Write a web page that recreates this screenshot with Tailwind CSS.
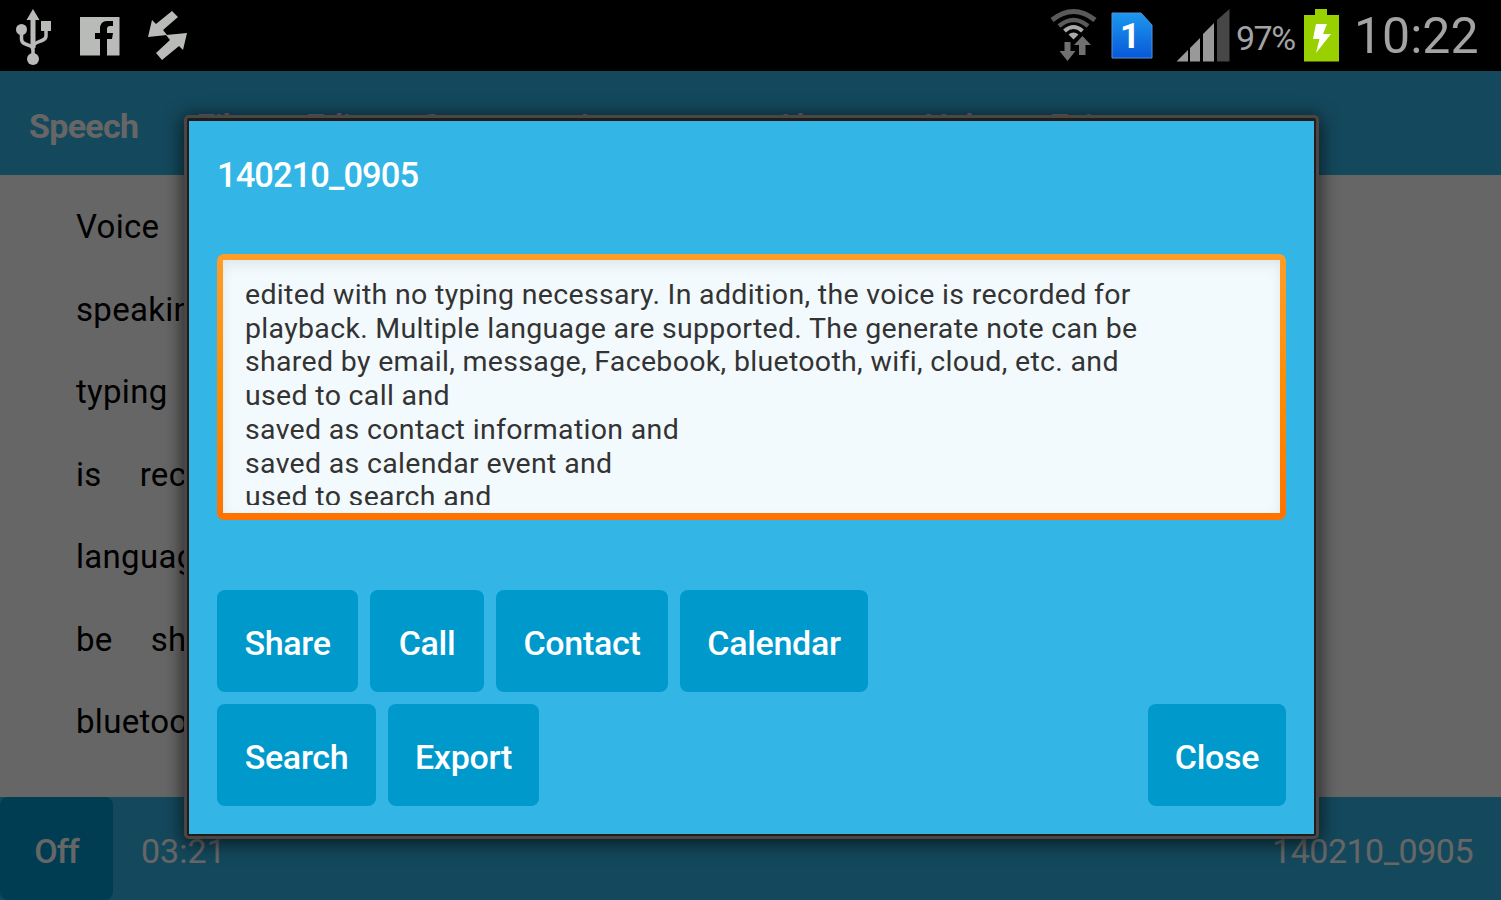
<!DOCTYPE html>
<html lang="en">
<head>
    <meta charset="UTF-8">
    <meta name="viewport" content="width=device-width, initial-scale=1.0">
    <title>Speech Notes</title>
    <script src="https://cdn.jsdelivr.net/npm/@tailwindcss/browser@4"></script>
</head>
<body class="h-[900px] w-[1501px] overflow-hidden bg-black font-['Roboto',sans-serif]">
    <div class="flex h-full flex-col">
        <!-- Status bar -->
        <header class="flex h-[71px] shrink-0 items-start justify-between bg-black text-[#a3a3a3]">
            <svg class="h-[71px] w-[200px]" viewBox="0 0 200 71" fill="#b9bbb9">
                <!-- USB -->
                <path d="M33 9l-6.500 11h4v28h5V20h4z"/>
                <circle cx="33" cy="59" r="6"/>
                <circle cx="21.500" cy="29.500" r="5.500"/>
                <path d="M41 21h10v10H41z"/>
                <path d="M33 57V45M21.500 30v9q0 4 4 5l4 1.500q3.500 1.500 3.500 5M46 30v6q0 3-4 4.500l-5 2q-4 1.500-4 5" fill="none" stroke="#b9bbb9" stroke-width="3.500"/>
                <!-- Facebook -->
                <path d="M80 17h39.500v38.500H107V39h5l1-6h-6v-4q0-3 3-3h3v-5h-6q-7 0-7 8v4h-5v6h5v16.500H80z"/>
                <!-- Sync arrows -->
                <path d="M172 11l6 6-15 13 4 5L148 37l4-17 4 4z"/>
                <path d="M187 33l-4 17-4-4-17 14-6-7 14-13-4-5z"/>
            </svg>
            <div class="flex h-[71px] items-start">
                <svg class="h-[71px] w-[186px]" viewBox="1050 0 186 71">
                    <!-- Wifi -->
                    <g fill="none">
                        <path d="M1052 20q21.500-17 43 0" stroke="#5a5a5a" stroke-width="5"/>
                        <path d="M1059 26q14.500-12 29 0" stroke="#5a5a5a" stroke-width="4.500"/>
                        <path d="M1064.500 31q9-8 18 0" stroke="#aaa" stroke-width="4"/>
                    </g>
                    <path d="M1068.500 34.500q5-4 10 0l-5 5z" fill="#aaa"/>
                    <path d="M1064.500 42h6v9h5l-8 10-8-10h5zM1079 55v-10h-5l8.500-9 8.500 9h-5.500v10z" fill="#707070"/>
                    <!-- SIM -->
                    <defs>
                        <linearGradient id="sim" x1="0" y1="0" x2="0" y2="1">
                            <stop offset="0" stop-color="#1c98ee"/>
                            <stop offset="1" stop-color="#0858d8"/>
                        </linearGradient>
                    </defs>
                    <path d="M1112 13h29l11 12v33h-40z" fill="url(#sim)" stroke="#5b8fd0" stroke-width="1"/>
                    <text x="1120" y="48" font-family="Roboto" font-size="35" font-weight="700" fill="#fff">1</text>
                    <!-- Signal -->
                    <path d="M1176.500 61.500L1188 50v11.500z" fill="#999"/>
                    <path d="M1190 48l10-10v23.500h-10zM1203 34l11-11v38.500h-11z" fill="#999"/>
                    <path d="M1217 20l12.500-11v52.500H1217z" fill="#474747"/>
                </svg>
                <span class="mt-[17px] w-[67px] text-[34px] leading-[42px] tracking-[-1.5px]">97%</span>
                <svg class="h-[71px] w-[38px]" viewBox="1303 0 38 71">
                    <path d="M1304 15h11V9h12v6h12v46.500h-35z" fill="#98d000"/>
                    <path d="M1316 24h11l-4 10h8l-15 19 3.500-14H1313z" fill="#fff"/>
                </svg>
                <span class="ml-[13px] w-[147px] text-[50px] leading-[72px]">10:22</span>
            </div>
        </header>

        <!-- App window behind the dialog -->
        <main class="relative flex min-h-0 flex-1 flex-col bg-white text-black">
            <nav class="flex h-[104px] shrink-0 items-center gap-[58px] whitespace-nowrap bg-[#33b5e5] px-[29px] pb-1 pt-2.5 text-[34px] font-medium tracking-[-0.7px] text-white">
                <span class="font-bold">Speech</span>
                <span>File</span>
                <span class="mr-0.5">Edit</span>
                <span>Screen</span>
                <span class="-mr-2">Language</span>
                <span class="mr-1">About</span>
                <span>Help</span>
                <span>Exit</span>
            </nav>
            <div class="flex min-h-0 flex-1 flex-col overflow-hidden pl-[76px] pt-[11px] text-[33px] leading-[82.5px] tracking-[0.3px]">
                <p>Voice</p>
                <p>speaking</p>
                <p>typing</p>
                <p class="flex gap-[38px]"><span>is</span><span>recorded</span></p>
                <p>language</p>
                <p class="flex gap-[38px]"><span>be</span><span>shared</span></p>
                <p>bluetooth</p>
            </div>
            <footer class="flex h-[103px] shrink-0 items-center bg-[#33b5e5] text-[34px] text-white">
                <div class="flex h-full w-[113px] items-center justify-center rounded-lg bg-[#0099cc] pt-1.5 font-medium tracking-[-1px]">Off</div>
                <span class="ml-7 pt-1.5">03:21</span>
                <span class="ml-auto mr-7 pt-1.5 tracking-[-0.5px]">140210_0905</span>
            </footer>
            <div class="absolute inset-0 bg-black/60"></div>
        </main>
    </div>

    <!-- Dialog -->
    <section class="absolute left-[184px] top-[115px] h-[724px] w-[1135px] rounded-[5px] border-[3px] border-[#4b4646] bg-[#251b18] p-0.5 pt-[3px] shadow-[0_3px_18px_2px_rgba(0,0,0,0.6)]">
        <div class="flex h-full flex-col bg-[#33b5e5] px-7 text-white">
            <h1 class="mt-[34px] h-10 text-[34.5px] font-medium leading-10 tracking-[-0.95px]">140210_0905</h1>
            <div class="mt-[59px] h-[266px] w-[1069px] rounded-[7px] bg-linear-to-b from-[#ff9d26] via-[#ff8c00] to-[#ff7200] p-1.5 pb-[7px]">
                <div class="h-[253px] bg-[#f3fafd] pl-[22px] pt-[18px] shadow-[inset_0_5px_12px_rgba(0,0,0,0.08)]">
                    <div class="h-[227px] overflow-hidden whitespace-pre text-[28.5px] leading-[33.7px] tracking-[0.32px] text-[#333]">edited with no typing necessary. In addition, the voice is recorded for
playback. Multiple language are supported. The generate note can be
shared by email, message, Facebook, bluetooth, wifi, cloud, etc. and
used to call and
saved as contact information and
saved as calendar event and
used to search and</div>
                </div>
            </div>
            <div class="mt-[70px] flex gap-3 text-[34px] font-medium tracking-[-0.3px]">
                <button class="h-[102px] w-[141px] rounded-lg bg-[#0099cc] pt-1">Share</button>
                <button class="h-[102px] w-[114px] rounded-lg bg-[#0099cc] pt-1">Call</button>
                <button class="h-[102px] w-[172px] rounded-lg bg-[#0099cc] pt-1">Contact</button>
                <button class="h-[102px] w-[188px] rounded-lg bg-[#0099cc] pt-1">Calendar</button>
            </div>
            <div class="mt-3 flex gap-3 text-[34px] font-medium tracking-[-0.3px]">
                <button class="h-[102px] w-[159px] rounded-lg bg-[#0099cc] pt-1">Search</button>
                <button class="h-[102px] w-[151px] rounded-lg bg-[#0099cc] pt-1">Export</button>
                <button class="ml-auto h-[102px] w-[138px] rounded-lg bg-[#0099cc] pt-1">Close</button>
            </div>
        </div>
    </section>
</body>
</html>
